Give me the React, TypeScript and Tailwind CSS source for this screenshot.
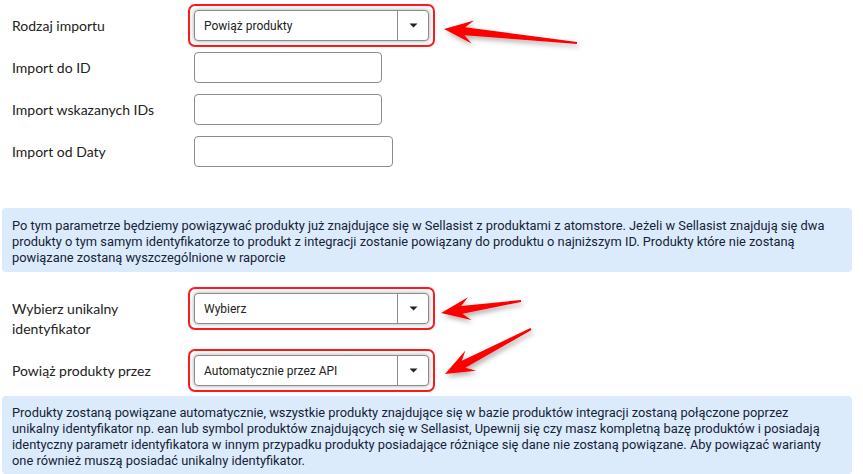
import React from "react";

type Pt = [number, number];

// Skitch-style annotation arrow, computed from tail to tip
function Arrow({ tail, tip }: { tail: Pt; tip: Pt }) {
  const dx = tip[0] - tail[0];
  const dy = tip[1] - tail[1];
  const len = Math.hypot(dx, dy);
  const ux = dx / len;
  const uy = dy / len;
  const nx = -uy;
  const ny = ux;
  const head = 27;
  const barb = 11.5;
  const neck = 4;
  const at = (along: number, side: number): string =>
    `${(tip[0] - ux * along + nx * side).toFixed(1)},${(tip[1] - uy * along + ny * side).toFixed(1)}`;
  const points = [
    at(0, 0),
    at(head + 2, barb),
    at(head - 6, neck),
    at(len, 1),
    at(len, -1),
    at(head - 6, -neck),
    at(head + 2, -barb),
  ].join(" ");
  return <polygon points={points} fill="#ff0000" filter="url(#arrowShadow)" />;
}

function Caret() {
  return (
    <svg width="9" height="5" viewBox="0 0 9 5">
      <path d="M0.5 0.5 L8.5 0.5 L4.5 4.5 Z" fill="#222" />
    </svg>
  );
}

function Select({ value }: { value: string }) {
  return (
    <div className="w-[247px] h-[43px] rounded-[7px] border-2 border-[#ff1a1a] p-[4px]">
      <div className="flex h-[31px] rounded-[4px] border border-[#8c8c8c] bg-white shadow-[0_0_4px_rgba(0,0,0,0.35)]">
        <div className="flex flex-1 items-center pl-[9px] text-[12px] text-[#222] font-['Roboto',sans-serif]">
          {value}
        </div>
        <div className="flex w-[31px] items-center justify-center border-l border-[#8c8c8c]">
          <Caret />
        </div>
      </div>
    </div>
  );
}

function TextInput({ width }: { width: string }) {
  return <div className={`ml-[6px] h-[31px] rounded-[4px] border border-[#8c8c8c] bg-white ${width}`} />;
}

function Label({ children, top }: { children: React.ReactNode; top?: boolean }) {
  return (
    <div
      className={`w-[188px] shrink-0 pl-[12px] pr-[26px] text-[14px] leading-[20px] text-[#222] font-['Lato',sans-serif] ${
        top ? "pt-[12px]" : "self-center"
      }`}
    >
      {children}
    </div>
  );
}

function InfoBox({ lines, className }: { lines: string[]; className: string }) {
  return (
    <div
      className={`ml-[2px] w-[850px] rounded-[4px] bg-[#dcebfc] pl-[10px] pr-[12px] text-[12.85px] leading-[16px] text-[#142236] font-['Roboto',sans-serif] ${className}`}
    >
      {lines.map((line, i) => (
        <div key={i} className="whitespace-nowrap">
          {line}
        </div>
      ))}
    </div>
  );
}

export default function App() {
  return (
    <div className="relative w-[863px] h-[474px] overflow-hidden bg-white">
      <div className="flex flex-col pt-[4px]">
        <div className="flex items-start">
          <Label top>Rodzaj importu</Label>
          <Select value="Powiąż produkty" />
        </div>
        <div className="mt-[5px] flex">
          <Label>Import do ID</Label>
          <TextInput width="w-[188px]" />
        </div>
        <div className="mt-[11px] flex">
          <Label>Import wskazanych IDs</Label>
          <TextInput width="w-[188px]" />
        </div>
        <div className="mt-[11px] flex">
          <Label>Import od Daty</Label>
          <TextInput width="w-[199px]" />
        </div>

        <InfoBox
          className="mt-[41px] pt-[10px] pb-[6px]"
          lines={[
            "Po tym parametrze będziemy powiązywać produkty już znajdujące się w Sellasist z produktami z atomstore. Jeżeli w Sellasist znajdują się dwa",
            "produkty o tym samym identyfikatorze to produkt z integracji zostanie powiązany do produktu o najniższym ID. Produkty które nie zostaną",
            "powiązane zostaną wyszczególnione w raporcie",
          ]}
        />

        <div className="mt-[15px] flex items-start">
          <Label top>Wybierz unikalny identyfikator</Label>
          <Select value="Wybierz" />
        </div>
        <div className="mt-[10px] flex items-start">
          <Label top>Powiąż produkty przez</Label>
          <Select value="Automatycznie przez API" />
        </div>

        <InfoBox
          className="mt-[4px] pt-[9px] pb-[5px]"
          lines={[
            "Produkty zostaną powiązane automatycznie, wszystkie produkty znajdujące się w bazie produktów integracji zostaną połączone poprzez",
            "unikalny identyfikator np. ean lub symbol produktów znajdujących się w Sellasist, Upewnij się czy masz kompletną bazę produktów i posiadają",
            "identyczny parametr identyfikatora w innym przypadku produkty posiadające różniące się dane nie zostaną powiązane. Aby powiązać warianty",
            "one również muszą posiadać unikalny identyfikator.",
          ]}
        />
      </div>

      <svg className="pointer-events-none absolute left-0 top-0" width="863" height="474">
        <defs>
          <filter id="arrowShadow" x="-20%" y="-50%" width="140%" height="200%">
            <feDropShadow dx="2" dy="3" stdDeviation="2.5" floodColor="#000" floodOpacity="0.3" />
          </filter>
        </defs>
        <Arrow tail={[577, 43]} tip={[444, 29]} />
        <Arrow tail={[521, 301]} tip={[441, 313]} />
        <Arrow tail={[531, 329]} tip={[445, 374]} />
      </svg>
    </div>
  );
}
